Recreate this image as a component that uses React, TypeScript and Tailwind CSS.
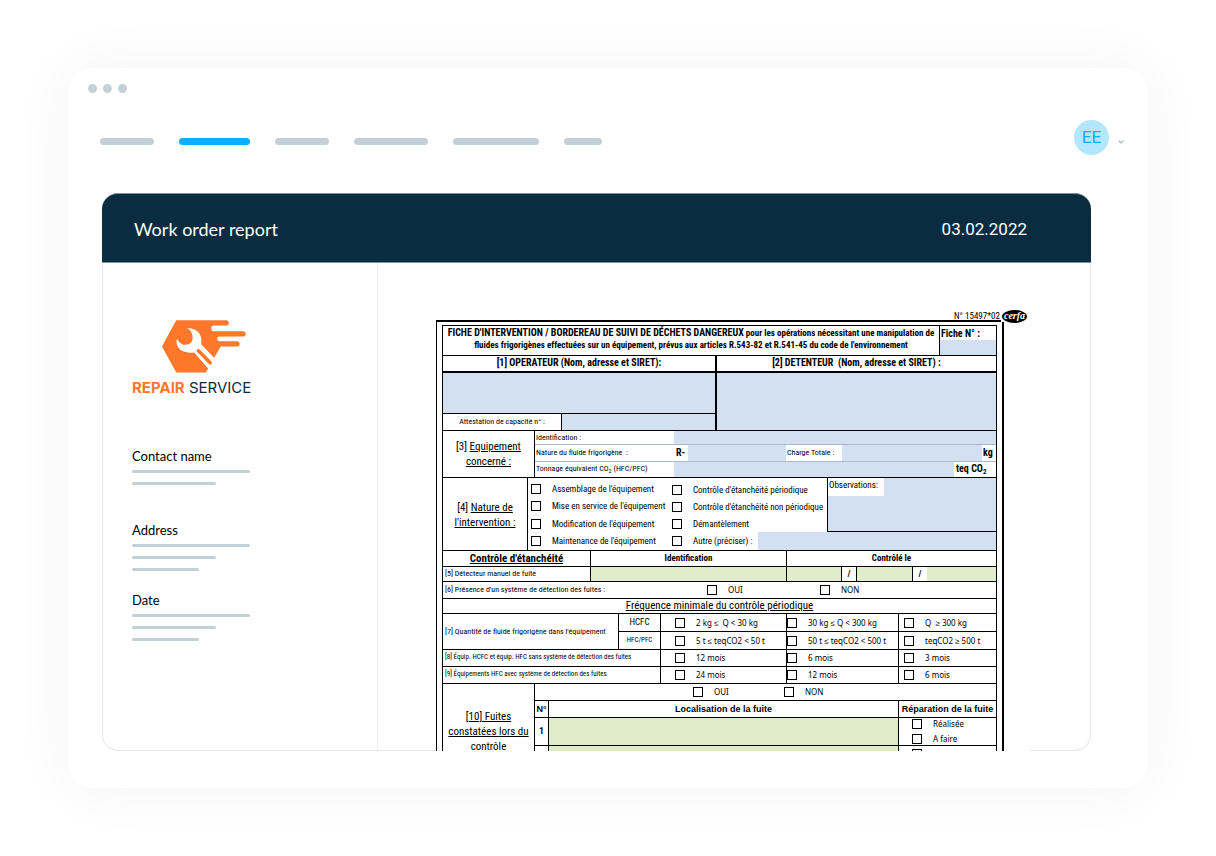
import type { ReactNode } from "react";

const fieldBlue = "block h-full min-h-0 w-full min-w-0 bg-[#d3e0f1] outline-none";
const fieldGreen = "block h-full min-h-0 w-full min-w-0 bg-[#e0ecca] outline-none";
const checkbox = "size-[10px] shrink-0 appearance-none border border-black bg-white";

function Field({ label, green = false }: { label: string; green?: boolean }) {
  return <input type="text" aria-label={label} className={green ? fieldGreen : fieldBlue} />;
}

function Check({ children, className = "" }: { children: ReactNode; className?: string }) {
  return (
    <label className={`flex items-center gap-[11px] leading-[10px] whitespace-pre ${className}`}>
      <input type="checkbox" className={checkbox} />
      <span>{children}</span>
    </label>
  );
}

function Logo() {
  return (
    <div className="flex w-[122px] flex-col">
      <svg viewBox="180 55 265 170" className="ml-7 h-[57px] w-[88px]" aria-hidden="true">
        <path
          fill="#ff772b"
          d="M229 61H379a8 8 0 0 1 0 16H343a8.500 8.500 0 0 0 0 17H430a8 8 0 0 1 0 16H359a7 7 0 0 0 0 14H412a8 8 0 0 1 0 16H363L343 174 304 133C307 112 302 86 262 84 275 93 279 103 278 116 278 128 268 134 258 135 246 136 236 128 231 116 226 136 237 163 283 158L325 206 318 218H229L186 140Z"
        />
        <path d="M296 153 331 189" stroke="#ff772b" strokeWidth="11" strokeLinecap="round" />
      </svg>
      <div className="mt-[3px] font-['Inter',sans-serif] text-[15px] leading-5 whitespace-nowrap text-[#0a2c40]">
        <span className="font-bold text-[#ff772b]">REPAIR</span> SERVICE
      </div>
    </div>
  );
}

function Detail({ title, short = false }: { title: string; short?: boolean }) {
  return (
    <section className={short ? "pb-4" : ""}>
      <h3 className="mb-1 text-[13px] leading-5 text-black">{title}</h3>
      <div className="flex flex-col gap-[9px]">
        <span className="h-[3px] w-[118px] rounded-full bg-[#c4d0d8]" />
        <span className="h-[3px] w-[84px] rounded-full bg-[#c4d0d8]" />
        {!short && <span className="h-[3px] w-[67px] rounded-full bg-[#c4d0d8]" />}
      </div>
    </section>
  );
}

function Frequency({ values }: { values: string[] }) {
  return (
    <div className="grid h-full grid-cols-[126px_112px_1fr] font-['Noto_Sans',sans-serif] text-[8px]">
      <Check className="border-r border-black pl-[14px]">{values[0]}</Check>
      <Check className="border-r border-black">{values[1]}</Check>
      <Check className="pl-[5px]">{values[2]}</Check>
    </div>
  );
}

function Fiche() {
  return (
    <form className="border border-b-0 border-black text-[8px] leading-[12px] text-black">
      <div className="grid h-[30px] grid-cols-[1fr_57px] border-b border-black">
        <h2 className="pt-px text-center text-[9px] leading-[12px] font-bold whitespace-nowrap">
          <span className="block">
            <span className="text-[10px]">FICHE D'INTERVENTION / BORDEREAU DE SUIVI DE DÉCHETS DANGEREUX</span> pour les
            opérations nécessitant une manipulation de
          </span>
          <span className="block">
            fluides frigorigènes effectuées sur un équipement, prévus aux articles R.543-82 et R.541-45 du code de
            l'environnement
          </span>
        </h2>
        <label className="grid grid-rows-[14px_15px] border-l border-black">
          <span className="pl-px text-[10px] leading-[15px] font-bold whitespace-nowrap">Fiche N° :</span>
          <input type="text" className={fieldBlue} />
        </label>
      </div>

      <div className="grid h-[17px] grid-cols-[274px_1fr] border-b-2 border-black text-center text-[10px] leading-[14px] font-bold">
        <h3 className="border-r-2 border-black">[1] OPERATEUR (Nom, adresse et SIRET):</h3>
        <h3 className="whitespace-pre">[2] DETENTEUR  (Nom, adresse et SIRET) :</h3>
      </div>

      <div className="grid h-[58px] grid-cols-[274px_1fr] border-b border-black">
        <div className="grid grid-rows-[41px_1fr] border-r-2 border-black">
          <div className="border-b border-black">
            <Field label="Opérateur" />
          </div>
          <label className="grid grid-cols-[119px_1fr] text-center leading-[16px]">
            <span className="border-r border-black">Attestation de capacité n° :</span>
            <input type="text" className={fieldBlue} />
          </label>
        </div>
        <Field label="Détenteur" />
      </div>

      <div className="grid h-[47px] grid-cols-[92px_1fr] border-b border-black">
        <h3 className="border-r border-black pt-2 text-center text-[11px] leading-[15px]">
          [3] <u>Equipement</u>
          <br />
          <u>concerné :</u>
        </h3>
        <div className="grid grid-rows-[14px_16px_16px]">
          <label className="grid grid-cols-[139px_1fr] border-b border-[#a9b8cc]">
            <span className="pl-px leading-[13px]">Identification :</span>
            <input type="text" className={fieldBlue} />
          </label>
          <div className="grid grid-cols-[139px_14px_98px_56px_1fr_14px] leading-[16px]">
            <span className="pl-px whitespace-pre">Nature du fluide frigorigène  :</span>
            <b className="pl-0.5 text-[10px]">R-</b>
            <Field label="Nature du fluide frigorigène" />
            <span className="pl-px">Charge Totale :</span>
            <Field label="Charge totale" />
            <b className="pl-px text-[10px]">kg</b>
          </div>
          <div className="grid grid-cols-[139px_1fr_42px] border-t border-[#a9b8cc] leading-[13px]">
            <span className="pl-px">
              Tonnage équivalent CO<sub className="text-[6px] leading-none">2</sub> (HFC/PFC)
            </span>
            <Field label="Tonnage équivalent CO2" />
            <b className="pl-0.5 text-[10px] whitespace-nowrap">
              teq CO<sub className="text-[7px] leading-none">2</sub>
            </b>
          </div>
        </div>
      </div>

      <div className="grid h-[73px] grid-cols-[85px_1fr] grid-rows-[72px] border-b border-black">
        <h3 className="border-r border-black pt-[22px] text-center text-[11px] leading-[15px]">
          [4] <u>Nature de</u>
          <br />
          <u>l'intervention :</u>
        </h3>
        <div className="grid grid-cols-[144px_1fr] text-[9px]">
          <div className="grid grid-rows-4 pt-0.5 pl-[3px]">
            <Check>Assemblage de l'équipement</Check>
            <Check>Mise en service de l'équipement</Check>
            <Check>Modification de l'équipement</Check>
            <Check>Maintenance de l'équipement</Check>
          </div>
          <div className="grid grid-rows-[54px_18px]">
            <div className="grid grid-cols-[155px_1fr]">
              <div className="grid grid-rows-3 pt-1">
                <Check>Contrôle d'étanchéité périodique</Check>
                <Check>Contrôle d'étanchéité non périodique</Check>
                <Check>Démantèlement</Check>
              </div>
              <label className="relative border-b border-l border-black">
                <span className="absolute top-0 left-0 h-[18px] w-[56px] bg-white pl-px leading-[14px]">
                  Observations:
                </span>
                <textarea className="block h-full w-full resize-none bg-[#d3e0f1] outline-none" />
              </label>
            </div>
            <div className="grid grid-cols-[86px_1fr]">
              <Check>Autre (préciser) :</Check>
              <Field label="Autre, préciser" />
            </div>
          </div>
        </div>
      </div>

      <div className="grid h-[16px] grid-cols-[148px_196px_1fr] border-b border-black text-center text-[9px] leading-[15px] font-bold">
        <h3 className="border-r border-black text-[11px] underline">Contrôle d'étanchéité</h3>
        <span className="border-r border-black">Identification</span>
        <span>Contrôlé le</span>
      </div>
      <div className="grid h-[15px] grid-cols-[148px_196px_55px_15px_56px_14px_1fr] border-b border-black leading-[14px]">
        <span className="border-r border-black pl-0.5">[5] Détecteur manuel de fuite</span>
        <div className="border-r border-black">
          <Field green label="Identification du détecteur" />
        </div>
        <div className="border-r border-black">
          <Field green label="Jour" />
        </div>
        <b className="border-r border-black text-center text-[9px]">/</b>
        <div className="border-r border-black">
          <Field green label="Mois" />
        </div>
        <b className="text-center text-[9px]">/</b>
        <Field green label="Année" />
      </div>

      <div className="grid h-[17px] grid-cols-[264px_113px_1fr] border-b border-black leading-[16px]">
        <span className="pl-0.5">[6] Présence d'un système de détection des fuites :</span>
        <Check className="font-['Noto_Sans',sans-serif]">OUI</Check>
        <Check className="font-['Noto_Sans',sans-serif]">NON</Check>
      </div>

      <h3 className="h-[15px] border-b border-black text-center text-[11px] leading-[14px] underline">
        Fréquence minimale du contrôle périodique
      </h3>

      <div className="grid h-[36px] grid-cols-[176px_1fr] border-b border-black">
        <span className="border-r border-black pl-0.5 leading-[35px] whitespace-nowrap">
          [7] Quantité de fluide frigorigène dans l'équipement
        </span>
        <div className="grid grid-rows-[18px_1fr]">
          <div className="grid grid-cols-[42px_1fr] border-b border-black">
            <span className="border-r border-black text-center text-[9px] leading-[17px]">HCFC</span>
            <Frequency values={["2 kg ≤  Q < 30 kg", "30 kg ≤ Q < 300 kg", "Q  ≥ 300 kg"]} />
          </div>
          <div className="grid grid-cols-[42px_1fr]">
            <span className="border-r border-black text-center text-[7px] leading-[17px]">HFC/PFC</span>
            <Frequency values={["5 t ≤ teqCO2 < 50 t", "50 t ≤ teqCO2 < 500 t", "teqCO2 ≥ 500 t"]} />
          </div>
        </div>
      </div>
      <div className="grid h-[17px] grid-cols-[218px_1fr] border-b border-black text-[7px] leading-[14px]">
        <span className="border-r border-black pl-0.5 whitespace-nowrap">
          [8] Équip. HCFC et équip. HFC sans système de détection des fuites
        </span>
        <Frequency values={["12 mois", "6 mois", "3 mois"]} />
      </div>
      <div className="grid h-[17px] grid-cols-[218px_1fr] border-b border-black text-[7px] leading-[14px]">
        <span className="border-r border-black pl-0.5 whitespace-nowrap">
          [9] Équipements HFC avec système de détection des fuites
        </span>
        <Frequency values={["24 mois", "12 mois", "6 mois"]} />
      </div>

      <div className="grid grid-cols-[92px_1fr]">
        <h3 className="border-r border-black pt-[25px] text-center text-[11px] leading-[15px]">
          <u>[10] Fuites</u>
          <br />
          <u>constatées lors du</u>
          <br />
          contrôle
        </h3>
        <div>
          <div className="grid h-[17px] grid-cols-[91px_1fr] border-b border-black pl-[158px] font-['Noto_Sans',sans-serif]">
            <Check>OUI</Check>
            <Check>NON</Check>
          </div>
          <div className="grid h-[17px] grid-cols-[14px_1fr_98px] border-b border-black text-center font-['Liberation_Sans',sans-serif] text-[9px] leading-[16px] font-bold whitespace-nowrap">
            <span className="border-r border-black">N°</span>
            <span>Localisation de la fuite</span>
            <span className="border-l border-black">Réparation de la fuite</span>
          </div>
          <div className="grid h-[28px] grid-cols-[14px_1fr_98px] border-b border-black">
            <b className="border-r border-black text-center text-[9px] leading-[27px]">1</b>
            <Field green label="Localisation de la fuite 1" />
            <div className="flex flex-col gap-[5px] border-l border-black pt-px pl-[13px] font-['Noto_Sans',sans-serif]">
              <Check>Réalisée</Check>
              <Check>A faire</Check>
            </div>
          </div>
          <div className="grid h-[28px] grid-cols-[14px_1fr_98px] border-b border-black">
            <span className="border-r border-black" />
            <Field green label="Localisation de la fuite 2" />
            <div className="flex border-l border-black pt-[3px] pl-[13px]">
              <input type="checkbox" aria-label="Réalisée 2" className={checkbox} />
            </div>
          </div>
        </div>
      </div>
    </form>
  );
}

export default function App() {
  return (
    <div className="min-h-screen bg-white p-[68px] font-['Lato',sans-serif]">
      <div className="rounded-3xl bg-white pb-[37px] shadow-[0_0_60px_rgba(0,0,0,0.05)]">
        <div className="flex gap-1.5 pt-4 pl-5">
          <span className="size-[9px] rounded-full bg-[#c4d0d8]" />
          <span className="size-[9px] rounded-full bg-[#c4d0d8]" />
          <span className="size-[9px] rounded-full bg-[#c4d0d8]" />
        </div>

        <header className="mt-[27px] flex items-end justify-between pr-6 pl-8">
          <nav className="flex gap-[25px] pb-2.5" aria-label="Main">
            <a href="#1" aria-label="Section 1" className="h-[7px] w-[54px] rounded-full bg-[#c4d0d8]" />
            <a href="#2" aria-label="Section 2" className="h-[7px] w-[71px] rounded-full bg-[#0eadff]" />
            <a href="#3" aria-label="Section 3" className="h-[7px] w-[54px] rounded-full bg-[#c4d0d8]" />
            <a href="#4" aria-label="Section 4" className="h-[7px] w-[74px] rounded-full bg-[#c4d0d8]" />
            <a href="#5" aria-label="Section 5" className="h-[7px] w-[86px] rounded-full bg-[#c4d0d8]" />
            <a href="#6" aria-label="Section 6" className="h-[7px] w-[38px] rounded-full bg-[#c4d0d8]" />
          </nav>
          <button type="button" className="flex items-center gap-[9px]">
            <span className="flex size-[35px] items-center justify-center rounded-full bg-[#b3e6ff] font-['Roboto',sans-serif] text-[17px] leading-none text-[#0eadff]">
              EE
            </span>
            <svg viewBox="0 0 6 4" className="mt-2 h-1 w-1.5" fill="none" stroke="#a9b8c2" strokeWidth="1.2" aria-hidden="true">
              <path d="M.5.500 3 3 5.500.500" />
            </svg>
          </button>
        </header>

        <section className="mt-[38px] mr-[57px] ml-[34px] rounded-2xl border border-t-0 border-[#e3e7ea]">
          <div className="-mx-px flex h-[70px] items-center justify-between rounded-t-2xl border-y border-[#7d8f9b] bg-[#0a2c40] pt-0.5 pr-16 pl-8 text-white">
            <h1 className="text-[18px] leading-6">Work order report</h1>
            <time className="font-['Roboto',sans-serif] text-[17px] leading-6">03.02.2022</time>
          </div>
          <div className="flex">
            <aside className="w-[275px] shrink-0 border-r border-[#eceff1] pt-[55px] pl-[29px]">
              <Logo />
              <div className="mt-12 flex flex-col gap-[19px]">
                <Detail title="Contact name" short />
                <Detail title="Address" />
                <Detail title="Date" />
              </div>
            </aside>
            <div className="relative mt-[47px] mr-[60px] -mb-px ml-[58px] h-[441px] min-w-0 flex-1 overflow-hidden bg-white font-['Roboto_Condensed','Liberation_Sans',sans-serif]">
              <div className="flex h-[10px] justify-end gap-0.5 pr-[3px]">
                <span className="text-[9px] leading-[12px]">N° 15497*02</span>
                <span className="flex h-[13px] w-[25px] shrink-0 items-center justify-center rounded-[50%] bg-black pb-px font-['Liberation_Serif',serif] text-[10px] leading-none font-bold text-white italic">
                  cerfa
                </span>
              </div>
              <div className="mr-[29px] h-[2px] bg-black" />
              <div className="mr-[26px] border-r-2 border-l border-black pt-[3px] pr-[5px] pl-[5px]">
                <Fiche />
              </div>
            </div>
          </div>
        </section>
      </div>
    </div>
  );
}
